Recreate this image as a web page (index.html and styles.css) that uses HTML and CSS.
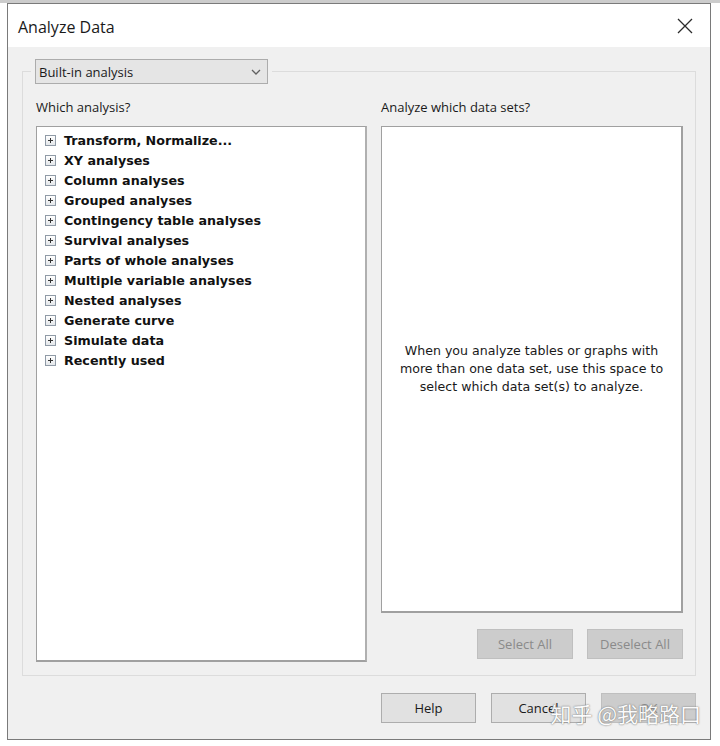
FILE: index.html
```html
<!DOCTYPE html>
<html lang="en">
<head>
<meta charset="utf-8">
<title>Analyze Data</title>
<link rel="stylesheet" href="styles.css">
</head>
<body>
<div class="backdrop"></div>
<div class="dialog">
  <div class="titlebar">
    <span class="title">Analyze Data</span>
    <svg class="close" width="16" height="16" viewBox="0 0 16 16" aria-label="Close">
      <path d="M1 1 L15 15 M15 1 L1 15" stroke="#2b2b2b" stroke-width="1.3" fill="none"/>
    </svg>
  </div>
  <div class="body">
    <fieldset class="group">
      <legend class="group-legend">
        <div class="combo">
          <span class="combo-text">Built-in analysis</span>
          <svg class="combo-arrow" width="10" height="6" viewBox="0 0 10 6">
            <path d="M1 1 L5 5 L9 1" stroke="#606060" stroke-width="1.3" fill="none"/>
          </svg>
        </div>
      </legend>
      <div class="columns">
        <div class="col col-left">
          <div class="label">Which analysis?</div>
          <ul class="tree">
            <li class="node"><span class="expander"></span>Transform, Normalize...</li>
            <li class="node"><span class="expander"></span>XY analyses</li>
            <li class="node"><span class="expander"></span>Column analyses</li>
            <li class="node"><span class="expander"></span>Grouped analyses</li>
            <li class="node"><span class="expander"></span>Contingency table analyses</li>
            <li class="node"><span class="expander"></span>Survival analyses</li>
            <li class="node"><span class="expander"></span>Parts of whole analyses</li>
            <li class="node"><span class="expander"></span>Multiple variable analyses</li>
            <li class="node"><span class="expander"></span>Nested analyses</li>
            <li class="node"><span class="expander"></span>Generate curve</li>
            <li class="node"><span class="expander"></span>Simulate data</li>
            <li class="node"><span class="expander"></span>Recently used</li>
          </ul>
        </div>
        <div class="col col-right">
          <div class="label">Analyze which data sets?</div>
          <div class="datasets">
            <p class="hint">When you analyze tables or graphs with<br>more than one data set, use this space to<br>select which data set(s) to analyze.</p>
          </div>
          <div class="select-row">
            <button class="btn btn-disabled" disabled>Select All</button>
            <button class="btn btn-disabled" disabled>Deselect All</button>
          </div>
        </div>
      </div>
    </fieldset>
    <div class="footer">
      <button class="btn">Help</button>
      <button class="btn">Cancel</button>
      <button class="btn btn-disabled" disabled>OK</button>
    </div>
  </div>
  <div class="watermark">知乎 @我略路口</div>
</div>
</body>
</html>
```

FILE: styles.css
```css
html, body {
  margin: 0;
  padding: 0;
  background: #ffffff;
}

body {
  width: 720px;
  height: 746px;
  overflow: hidden;
  font-family: "Open Sans", "Noto Sans", sans-serif;
}

.backdrop {
  height: 3px;
  background: #9a9a9a;
  opacity: 0.5;
}

.dialog {
  position: relative;
  margin-left: 7px;
  width: 702px;
  height: 735px;
  border: 1px solid #7a7a7a;
  background: #f0f0f0;
  display: flex;
  flex-direction: column;
}

.titlebar {
  height: 43px;
  background: #ffffff;
  display: flex;
  align-items: center;
  justify-content: space-between;
  padding: 0 17px 0 10px;
  flex: none;
}

.title {
  font-family: "Open Sans", "Noto Sans", sans-serif;
  font-size: 16px;
  color: #1a1a1a;
  padding-top: 2px;
}

.close {
  display: block;
}

.body {
  flex: 1;
  padding: 12px 14px 0 14px;
  display: flex;
  flex-direction: column;
}

.group {
  margin: 0;
  padding: 0 12px 13px 13px;
  border: 1px solid #dcdcdc;
  min-width: 0;
}

.group-legend {
  padding: 0 4px;
  margin-left: -5px;
}

.combo {
  height: 23px;
  border: 1px solid #acacac;
  background: #e5e5e5;
  display: flex;
  align-items: center;
  justify-content: space-between;
  padding: 0 6px 0 3px;
  box-sizing: content-box;
  width: 222px;
}

.combo-text {
  font-size: 13px;
  color: #1a1a1a;
}

.combo-arrow {
  display: block;
}

.columns {
  display: flex;
  gap: 14px;
  margin-top: 14px;
}

.col {
  display: flex;
  flex-direction: column;
}

.col-left {
  width: 331px;
}

.col-right {
  width: 302px;
}

.label {
  font-size: 13px;
  color: #1a1a1a;
  height: 18px;
  line-height: 18px;
  margin-bottom: 10px;
}

.tree {
  list-style: none;
  margin: 0;
  padding: 3px 0 0 8px;
  height: 530px;
  background: #ffffff;
  border-style: solid;
  border-width: 1px 2px 2px 1px;
  border-color: #a0a0a0 #b0b0b0 #a0a0a0 #a0a0a0;
}

.node {
  height: 20px;
  display: flex;
  align-items: center;
  font-family: "DejaVu Sans", Verdana, sans-serif;
  font-weight: bold;
  font-size: 12.7px;
  color: #111111;
}

.expander {
  position: relative;
  width: 9px;
  height: 9px;
  border: 1px solid #8f9aa6;
  background: linear-gradient(#ffffff, #e4e7ea);
  margin-right: 8px;
  flex: none;
}

.expander::before,
.expander::after {
  content: "";
  position: absolute;
  background: #333333;
}

.expander::before {
  left: 2px;
  top: 4px;
  width: 5px;
  height: 1px;
}

.expander::after {
  left: 4px;
  top: 2px;
  width: 1px;
  height: 5px;
}

.datasets {
  height: 484px;
  background: #ffffff;
  border-style: solid;
  border-width: 1px 2px 2px 1px;
  border-color: #a0a0a0;
  display: flex;
  align-items: center;
  justify-content: center;
}

.hint {
  margin: 0;
  text-align: center;
  font-family: "DejaVu Sans", Tahoma, sans-serif;
  font-size: 12.6px;
  line-height: 18px;
  color: #1a1a1a;
}

.select-row {
  display: flex;
  justify-content: flex-end;
  gap: 14px;
  margin-top: 16px;
}

.btn {
  width: 96px;
  height: 30px;
  border: 1px solid #adadad;
  background: #e1e1e1;
  font-family: "Open Sans", "Noto Sans", sans-serif;
  font-size: 13px;
  color: #1a1a1a;
  padding: 0;
}

.btn-disabled {
  background: #cccccc;
  border-color: #bfbfbf;
  color: #8a8a8a;
}

.footer {
  display: flex;
  justify-content: flex-end;
  gap: 15px;
  margin-top: 17px;
}

.footer .btn {
  width: 95px;
}

.watermark {
  position: absolute;
  right: 9px;
  bottom: 11px;
  font-family: "Noto Sans CJK SC", sans-serif;
  font-size: 21px;
  color: #ffffff;
  text-shadow: 0 0 1px #6a6a6a, 0 0 2px #8a8a8a;
  opacity: 0.9;
}
```
